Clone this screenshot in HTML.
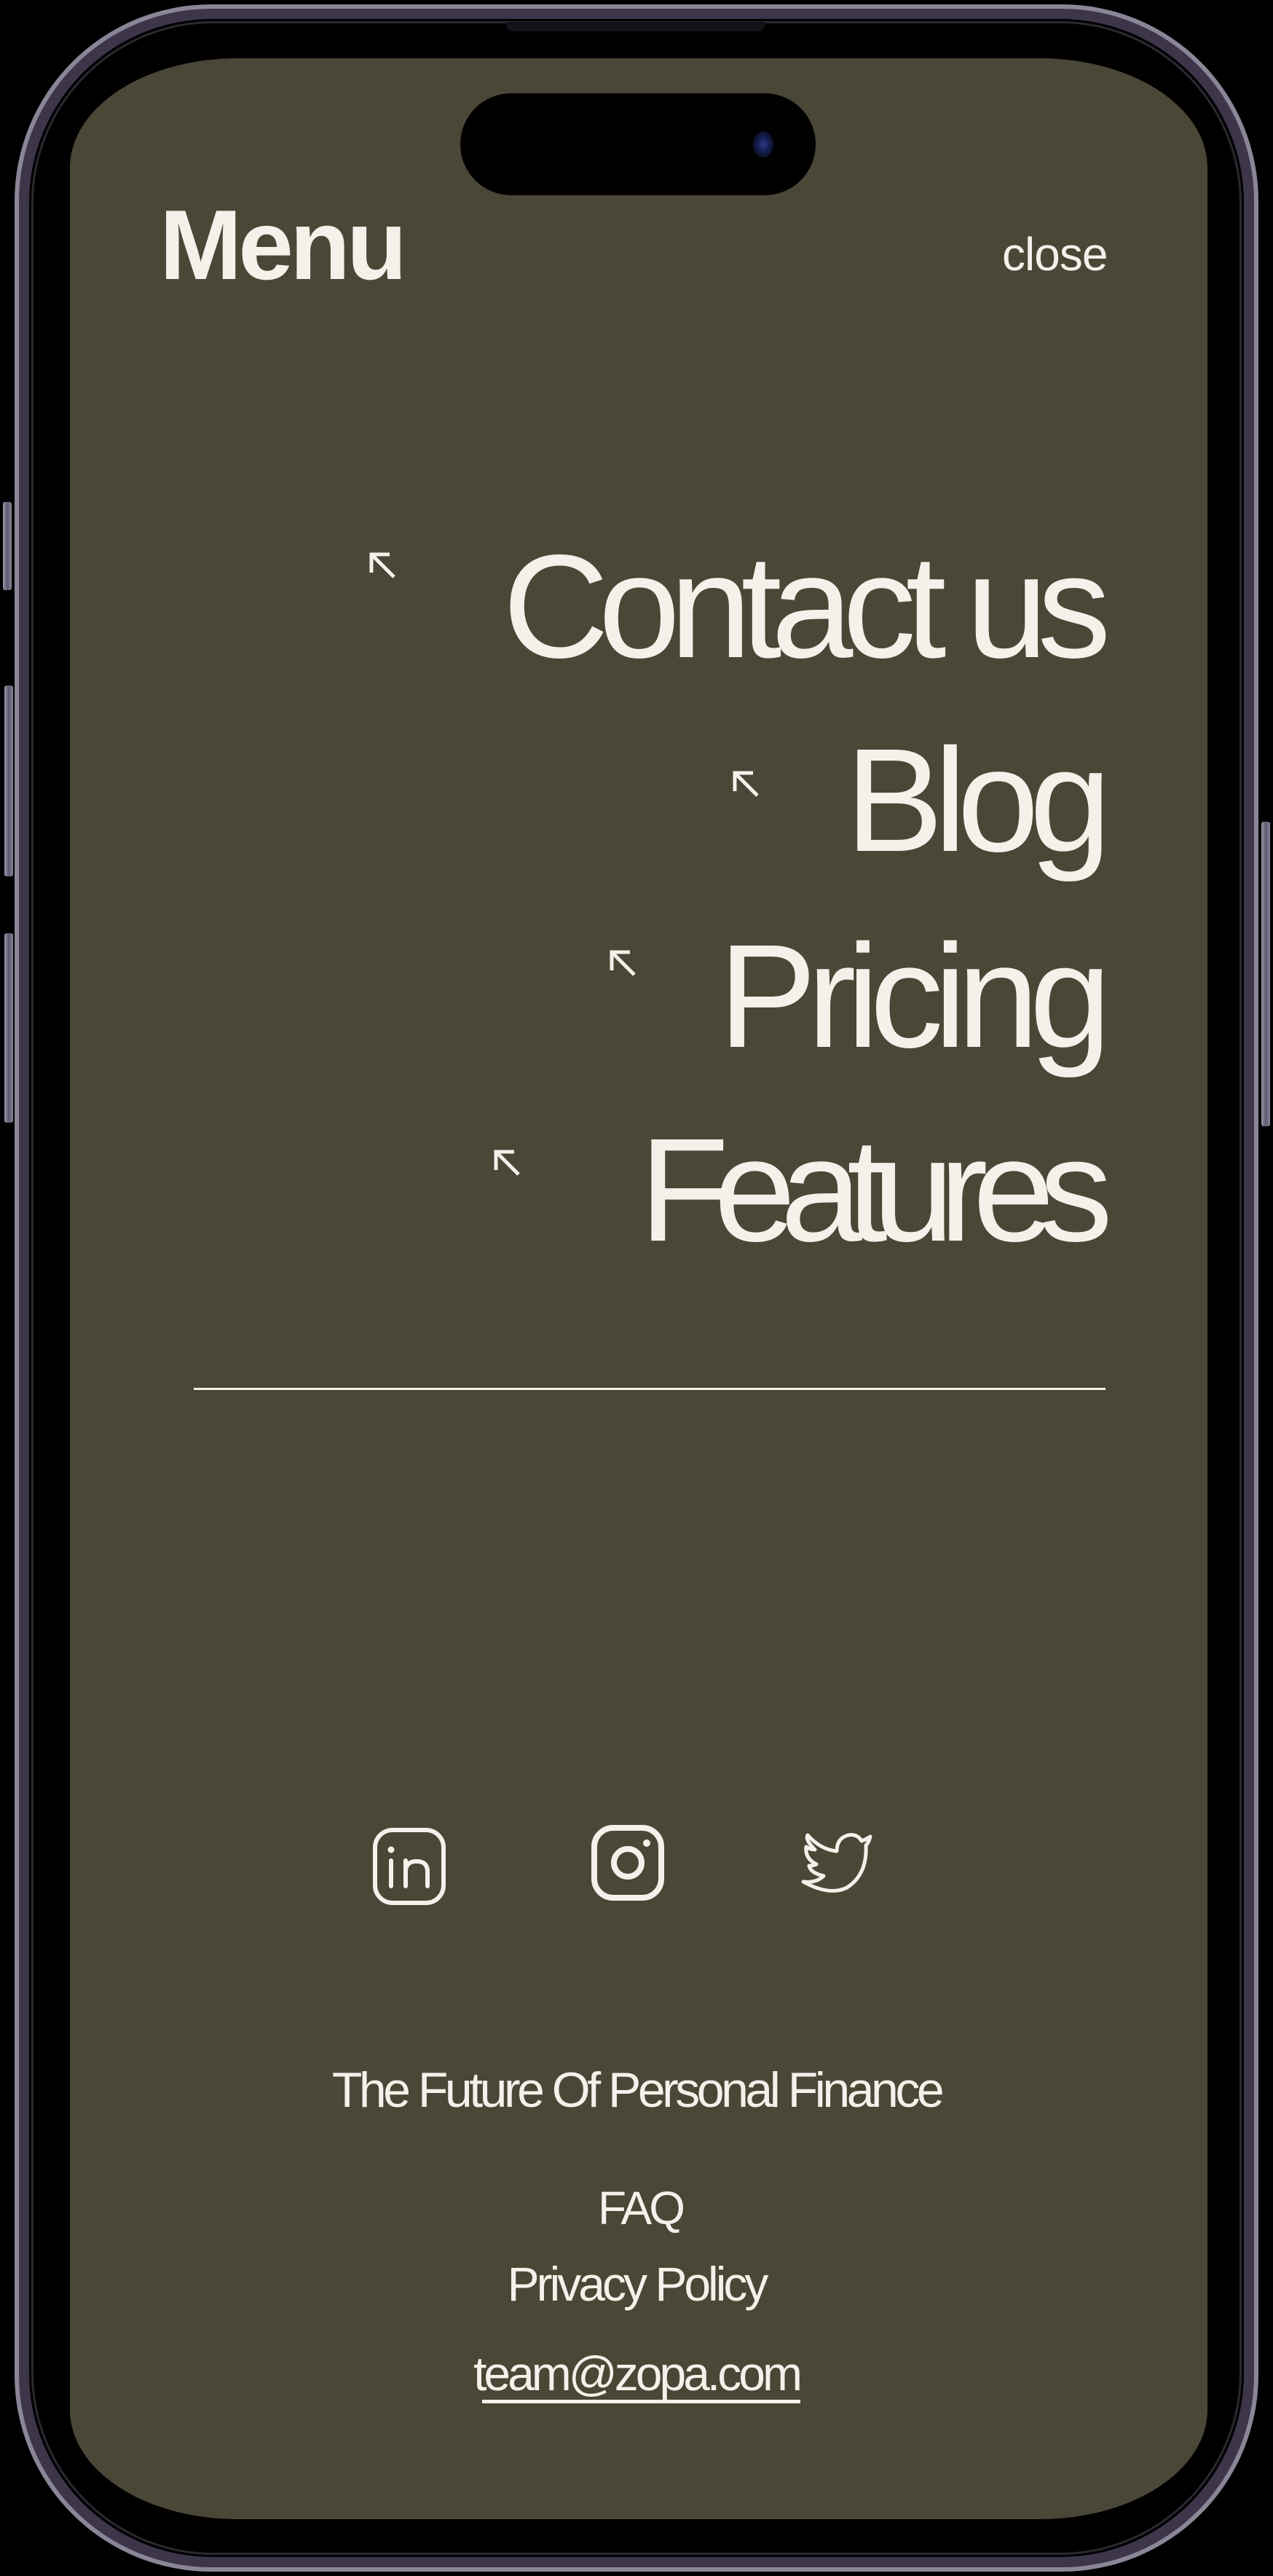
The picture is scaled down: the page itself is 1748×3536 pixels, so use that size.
<!DOCTYPE html>
<html><head><meta charset="utf-8"><style>
html,body{margin:0;padding:0;background:#000;}
body{width:1748px;height:3536px;position:relative;overflow:hidden;font-family:"Liberation Sans",sans-serif;}
.frame{position:absolute;left:20px;top:6px;width:1708px;height:3524px;border-radius:270px;background:#8a8698;}
.frame2{position:absolute;left:26px;top:12px;width:1696px;height:3512px;border-radius:264px;background:#3d364b;}
.frame3{position:absolute;left:40px;top:26px;width:1668px;height:3484px;border-radius:252px;background:#000;}
.frame4{position:absolute;left:43px;top:29px;width:1662px;height:3478px;border-radius:250px;border:3px solid #2a2830;box-sizing:border-box;}
.screen{position:absolute;left:96px;top:80px;width:1562px;height:3378px;background:#4a4737;border-radius:230px/150px;overflow:hidden;}
.btn{position:absolute;width:12px;background:linear-gradient(90deg,#9b97a8,#5e5870,#8a8598);border-radius:3px;}
.island{position:absolute;left:632px;top:128px;width:488px;height:140px;border-radius:70px;background:#000;}
.cam{position:absolute;left:1034px;top:180px;width:28px;height:36px;border-radius:50%;background:radial-gradient(ellipse at center,#2a3a8a 0%,#101840 50%,#05070f 100%);}
.t{position:absolute;color:#f3f1ea;white-space:nowrap;}
.item{position:absolute;right:235px;color:#f3f1ea;font-size:202px;line-height:1;letter-spacing:-13px;white-space:nowrap;}
.ar{position:absolute;width:36px;height:36px;}
.cen{position:absolute;left:0;width:1748px;text-align:center;color:#f3f1ea;white-space:nowrap;line-height:1;}
</style></head><body>
<div class="btn" style="left:4px;top:689px;height:121px"></div>
<div class="btn" style="left:6px;top:941px;height:262px"></div>
<div class="btn" style="left:6px;top:1281px;height:260px"></div>
<div class="btn" style="left:1732px;top:1128px;height:418px"></div>
<div class="frame"></div><div class="frame2"></div><div class="frame3"></div><div class="frame4"></div>
<div style="position:absolute;left:695px;top:30px;width:355px;height:13px;background:#15131a;border-radius:0 0 10px 10px"></div>
<div class="screen"></div>
<div class="island"></div><div class="cam"></div>

<div class="t" style="left:219px;top:268px;font-size:136px;font-weight:bold;letter-spacing:-5px;line-height:1;">Menu</div>
<div class="t" style="left:1376px;top:317px;font-size:64px;letter-spacing:-1px;line-height:1;">close</div>

<div class="item" style="top:731px;letter-spacing:-14.5px;right:237px">Contact us</div>
<div class="item" style="top:997px">Blog</div>
<div class="item" style="top:1266px">Pricing</div>
<div class="item" style="top:1532px;letter-spacing:-21px;right:241px">Features</div>

<svg class="ar" style="left:507px;top:758px" viewBox="0 0 36 36"><path d="M3 28V3H28M3 3L34 34" stroke="#f3f1ea" stroke-width="5" fill="none"/></svg>
<svg class="ar" style="left:1006px;top:1058px" viewBox="0 0 36 36"><path d="M3 28V3H28M3 3L34 34" stroke="#f3f1ea" stroke-width="5" fill="none"/></svg>
<svg class="ar" style="left:837px;top:1304px" viewBox="0 0 36 36"><path d="M3 28V3H28M3 3L34 34" stroke="#f3f1ea" stroke-width="5" fill="none"/></svg>
<svg class="ar" style="left:678px;top:1578px" viewBox="0 0 36 36"><path d="M3 28V3H28M3 3L34 34" stroke="#f3f1ea" stroke-width="5" fill="none"/></svg>

<div style="position:absolute;left:266px;top:1905px;width:1252px;height:3px;background:#f3f1ea"></div>

<svg style="position:absolute;left:512px;top:2509px" width="100" height="106" viewBox="0 0 100 106"><rect x="3" y="3" width="94" height="100" rx="24" stroke="#f3f1ea" stroke-width="6" fill="none"/><circle cx="25" cy="30" r="4.5" fill="#f3f1ea"/><path d="M25 45V80M45 80V45M45 60Q45 46 60 46Q75 46 75 60V80" stroke="#f3f1ea" stroke-width="6" fill="none" stroke-linecap="round"/></svg>
<svg style="position:absolute;left:812px;top:2505px" width="100" height="104" viewBox="0 0 100 104"><rect x="4" y="4" width="92" height="96" rx="26" stroke="#f3f1ea" stroke-width="8" fill="none"/><circle cx="50" cy="52" r="19" stroke="#f3f1ea" stroke-width="8" fill="none"/><circle cx="76" cy="25" r="5" fill="#f3f1ea"/></svg>
<svg style="position:absolute;left:1099px;top:2513px" width="100" height="90" viewBox="0 0 100 90"><path d="M4 70Q22 72 32 62Q14 58 12 48Q18 48 22 46Q6 38 8 22Q14 26 20 26Q6 12 10 6Q28 26 50 28Q50 10 66 6Q78 4 84 14Q90 12 96 8Q94 16 90 20Q92 60 64 78Q40 90 4 70Z" stroke="#f3f1ea" stroke-width="5" fill="none" stroke-linejoin="round"/></svg>

<div class="cen" style="top:2835px;font-size:68px;letter-spacing:-4.5px;">The Future Of Personal Finance</div>
<div class="cen" style="top:2999px;font-size:64px;letter-spacing:-4px;padding-left:10px;box-sizing:border-box;">FAQ</div>
<div class="cen" style="top:3102px;font-size:66px;letter-spacing:-4px;">Privacy Policy</div>
<div class="cen" style="top:3225px;font-size:66px;letter-spacing:-4px;">team@zopa.com</div>
<div style="position:absolute;left:662px;top:3294px;width:437px;height:5px;background:#f3f1ea"></div>
</body></html>
